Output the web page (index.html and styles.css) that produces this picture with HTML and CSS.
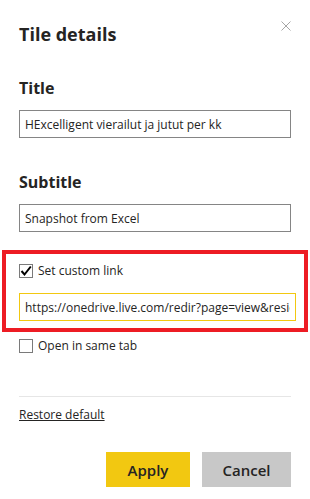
FILE: index.html
```html
<!DOCTYPE html>
<html lang="en">

<head>
    <meta charset="UTF-8">
    <meta name="viewport" content="width=device-width, initial-scale=1.0">
    <title>Tile details</title>
    <link rel="stylesheet" href="styles.css">
</head>

<body>

    <div class="panel">
        <div class="header">
            <h1>Tile details</h1>
            <button type="button" class="close" aria-label="Close">
                <svg width="10" height="10" viewBox="0 0 10 10">
                    <path d="M0.5 0.5 L9.5 9.5 M9.5 0.5 L0.5 9.5" stroke="#a6a6a6" stroke-width="1" fill="none" />
                </svg>
            </button>
        </div>

        <label class="field-label" for="title">Title</label>
        <input type="text" id="title" class="text-input" value="HExcelligent vierailut ja jutut per kk">

        <label class="field-label subtitle" for="subtitle">Subtitle</label>
        <input type="text" id="subtitle" class="text-input" value="Snapshot from Excel">

        <div class="highlight">
            <label class="check-row">
                <span class="check checked">
                    <svg width="12" height="12" viewBox="0 0 12 12">
                        <path d="M1.5 6 L4.5 9.5 L10.8 1.5" stroke="#000" stroke-width="2" fill="none" />
                    </svg>
                </span>
                Set custom link
            </label>
            <input type="text" class="text-input link-input"
                value="https://onedrive.live.com/redir?page=view&resid=ABC123">
        </div>

        <label class="check-row same-tab">
            <span class="check"></span>
            Open in same tab
        </label>

        <hr class="divider">

        <a href="#" class="restore">Restore default</a>

        <div class="actions">
            <button type="button" class="btn apply">Apply</button>
            <button type="button" class="btn cancel">Cancel</button>
        </div>
    </div>

</body>

</html>
```

FILE: styles.css
```css
body {
    margin: 0;
    font-family: "Open Sans", "Noto Sans", sans-serif;
    color: #252423;
    background: #fff;
}

.panel {
    padding: 0 19px;
}

.header {
    display: flex;
    justify-content: space-between;
    align-items: flex-start;
}

h1 {
    margin: 22px 0 0;
    font-size: 18px;
    line-height: 24px;
    font-weight: 700;
}

.close {
    margin: 21px 0 0;
    padding: 0;
    border: none;
    background: none;
    width: 10px;
    height: 10px;
    cursor: pointer;
}

.close svg {
    display: block;
}

.field-label {
    display: block;
    margin-top: 32px;
    font-size: 16px;
    line-height: 20px;
    font-weight: 700;
}

.field-label.subtitle {
    margin-top: 34px;
}

.text-input {
    display: block;
    width: 100%;
    height: 28px;
    margin-top: 12px;
    padding: 0 5px;
    box-sizing: border-box;
    border: 1px solid #858585;
    font-family: inherit;
    font-size: 12px;
    color: #252423;
    outline: none;
}

.highlight {
    margin: 18px -17px 0;
    padding: 10px 8px 7px 13px;
    border: 4px solid #ed1c24;
}

.check-row {
    display: flex;
    align-items: center;
    gap: 5px;
    font-size: 12px;
    line-height: 14px;
}

.check {
    width: 14px;
    height: 14px;
    box-sizing: border-box;
    border: 1px solid #7a7a7a;
    display: flex;
    align-items: center;
    justify-content: center;
}

.link-input {
    margin-top: 15px;
    border-color: #f2c811;
}

.same-tab {
    margin-top: 7px;
}

.divider {
    margin: 43px 0 0;
    border: none;
    border-top: 1px solid #e6e6e6;
}

.restore {
    display: inline-block;
    margin-top: 10px;
    font-size: 12px;
    line-height: 16px;
    color: #252423;
}

.actions {
    display: flex;
    justify-content: flex-end;
    gap: 12px;
    margin-top: 28px;
}

.btn {
    height: 35px;
    border: none;
    font-family: inherit;
    font-size: 15px;
    font-weight: 600;
    color: #252423;
    cursor: pointer;
}

.apply {
    width: 84px;
    background-color: #f2c811;
}

.cancel {
    width: 89px;
    background-color: #c8c8c8;
}
```
